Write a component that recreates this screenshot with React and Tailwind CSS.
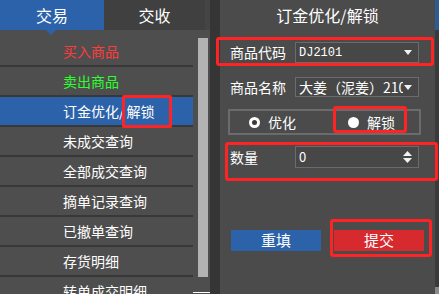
import { Fragment } from 'react';

const menu = [
  { label: '买入商品', color: 'text-[#ff3c3c]' },
  { label: '卖出商品', color: 'text-[#2cff2c]' },
  { label: 'active', color: 'text-white' },
  { label: '未成交查询', color: 'text-white' },
  { label: '全部成交查询', color: 'text-white' },
  { label: '摘单记录查询', color: 'text-white' },
  { label: '已撤单查询', color: 'text-white' },
  { label: '存货明细', color: 'text-white' },
  { label: '转单成交明细', color: 'text-white' },
];

const font = { fontFamily: '"Noto Sans CJK SC", "Noto Sans", sans-serif' };

const Caret = () => (
  <svg width="8" height="5" viewBox="0 0 8 5" className="shrink-0">
    <path d="M0 0 H8 L4 5 Z" fill="#f2f2f2" />
  </svg>
);

const SideMenu = () => (
  <div className="flex w-[210px] shrink-0 flex-col bg-[#4e4e4e]">
    <div className="flex h-[30px] shrink-0 bg-[#454545] text-[16px] text-white">
      <div className="relative flex w-[104px] items-center justify-center bg-[#2b62aa]">
        交易
        <span className="absolute left-[46px] top-[30px] z-10 h-0 w-0 border-x-[5px] border-t-[5px] border-x-transparent border-t-[#2b62aa]" />
      </div>
      <div className="flex w-[101px] items-center justify-center bg-[#404040]">交收</div>
    </div>
    <div className="flex min-h-0 flex-1 overflow-hidden">
      <div className="w-[193px] shrink-0">
        {menu.map((item, i) => (
          <div
            key={item.label}
            className={`flex items-center border-b-2 border-[#383838] pl-[63px] text-[14px] ${item.color} ${
              i === 0 ? 'h-[37px] pt-[7px]' : 'h-[30px]'
            } ${item.label === 'active' ? 'bg-[#2b62aa]' : ''}`}
          >
            {item.label === 'active' ? (
              <Fragment>
                订金优化/
                <span className="relative ml-[2px]">
                  解锁
                  <span className="absolute -left-[5px] -right-[17px] -top-[6px] -bottom-[6px] rounded-[2px] border-[3px] border-[#ff2323]" />
                </span>
              </Fragment>
            ) : (
              item.label
            )}
          </div>
        ))}
      </div>
      <div className="flex w-[17px] flex-col pb-[1px] pl-[5px] pr-[2px] pt-[8px]">
        <div className="h-[239px] bg-[#b3b3b3]" />
        <div className="flex-1" />
        <div className="-ml-[5px] -mr-[2px] h-[1px] bg-white" />
      </div>
    </div>
  </div>
);

const Field = ({ label, children, className = '' }) => (
  <div className={`flex items-center pl-[10px] ${className}`}>
    <span className="w-[65px] shrink-0 text-[14px] text-white">{label}</span>
    <div className="flex h-full w-[124px] items-center justify-between border border-[#6b6b6b] bg-[#474747] pl-[3px] pr-[6px]">
      {children}
    </div>
  </div>
);

const OrderForm = () => (
  <div className="relative flex w-[215px] shrink-0 flex-col bg-[#4b4b4b]">
    <div className="flex h-[30px] items-center justify-center text-[16px] text-white">订金优化/解锁</div>

    <Field label="商品代码" className="mt-[12px] h-[21px]">
      <span className="text-[12px] text-white" style={{ fontFamily: '"Liberation Mono", monospace' }}>DJ2101</span>
      <Caret />
    </Field>

    <Field label="商品名称" className="mt-[14px] h-[20px]">
      <span className="w-[104px] overflow-hidden whitespace-nowrap text-[14px] text-white">大姜（泥姜）2101</span>
      <Caret />
    </Field>

    <div className="ml-[8px] mt-[12px] flex h-[26px] w-[193px] items-center border-2 border-[#6b6b6b] pl-[19px] text-[14px] text-white">
      <span className="h-[11px] w-[11px] rounded-full border-[3px] border-white bg-[#3a3a3a]" />
      <span className="ml-[8px]">优化</span>
      <span className="ml-[52px] h-[11px] w-[11px] rounded-full bg-white" />
      <span className="ml-[8px]">解锁</span>
    </div>

    <Field label="数量" className="mt-[11px] h-[22px]">
      <span className="text-[13px] text-white">0</span>
      <span className="flex flex-col gap-[2px]">
        <svg width="9" height="5" viewBox="0 0 9 5"><path d="M0 5 H9 L4.5 0 Z" fill="#f2f2f2" /></svg>
        <svg width="9" height="5" viewBox="0 0 9 5"><path d="M0 0 H9 L4.5 5 Z" fill="#f2f2f2" /></svg>
      </span>
    </Field>

    <div className="ml-[11px] mt-[62px] flex h-[21px] gap-[13px] text-[15px] text-white">
      <button className="flex w-[90px] items-center justify-center bg-[#2b62aa]">重填</button>
      <button className="flex w-[90px] items-center justify-center bg-[#d62a2f]">提交</button>
    </div>

    {/* annotation boxes */}
    <div className="pointer-events-none absolute left-[-4px] top-[37px] h-[29px] w-[218px] rounded-[3px] border-[3px] border-[#ff2323]" />
    <div className="pointer-events-none absolute left-[113px] top-[106px] h-[27px] w-[74px] rounded-[3px] border-[3px] border-[#ff2323]" />
    <div className="pointer-events-none absolute left-[5px] top-[142px] h-[39px] w-[213px] rounded-[3px] border-[3px] border-[#ff2323]" />
    <div className="pointer-events-none absolute left-[110px] top-[219px] h-[38px] w-[102px] rounded-[3px] border-[3px] border-[#ff2323]" />
  </div>
);

export default function App() {
  return (
    <div className="flex h-[294px] w-[439px] overflow-hidden bg-[#4b4b4b]" style={font}>
      <SideMenu />
      <div className="w-[10px] shrink-0 bg-[#353535]" />
      <OrderForm />
      <div className="flex w-[4px] shrink-0 flex-col bg-[#3a3a3a]">
        <div className="h-[30px] bg-[#2d5b94]" />
        <div className="flex-1" />
        <div className="h-[7px] bg-[#8a8a8a]" />
      </div>
    </div>
  );
}
